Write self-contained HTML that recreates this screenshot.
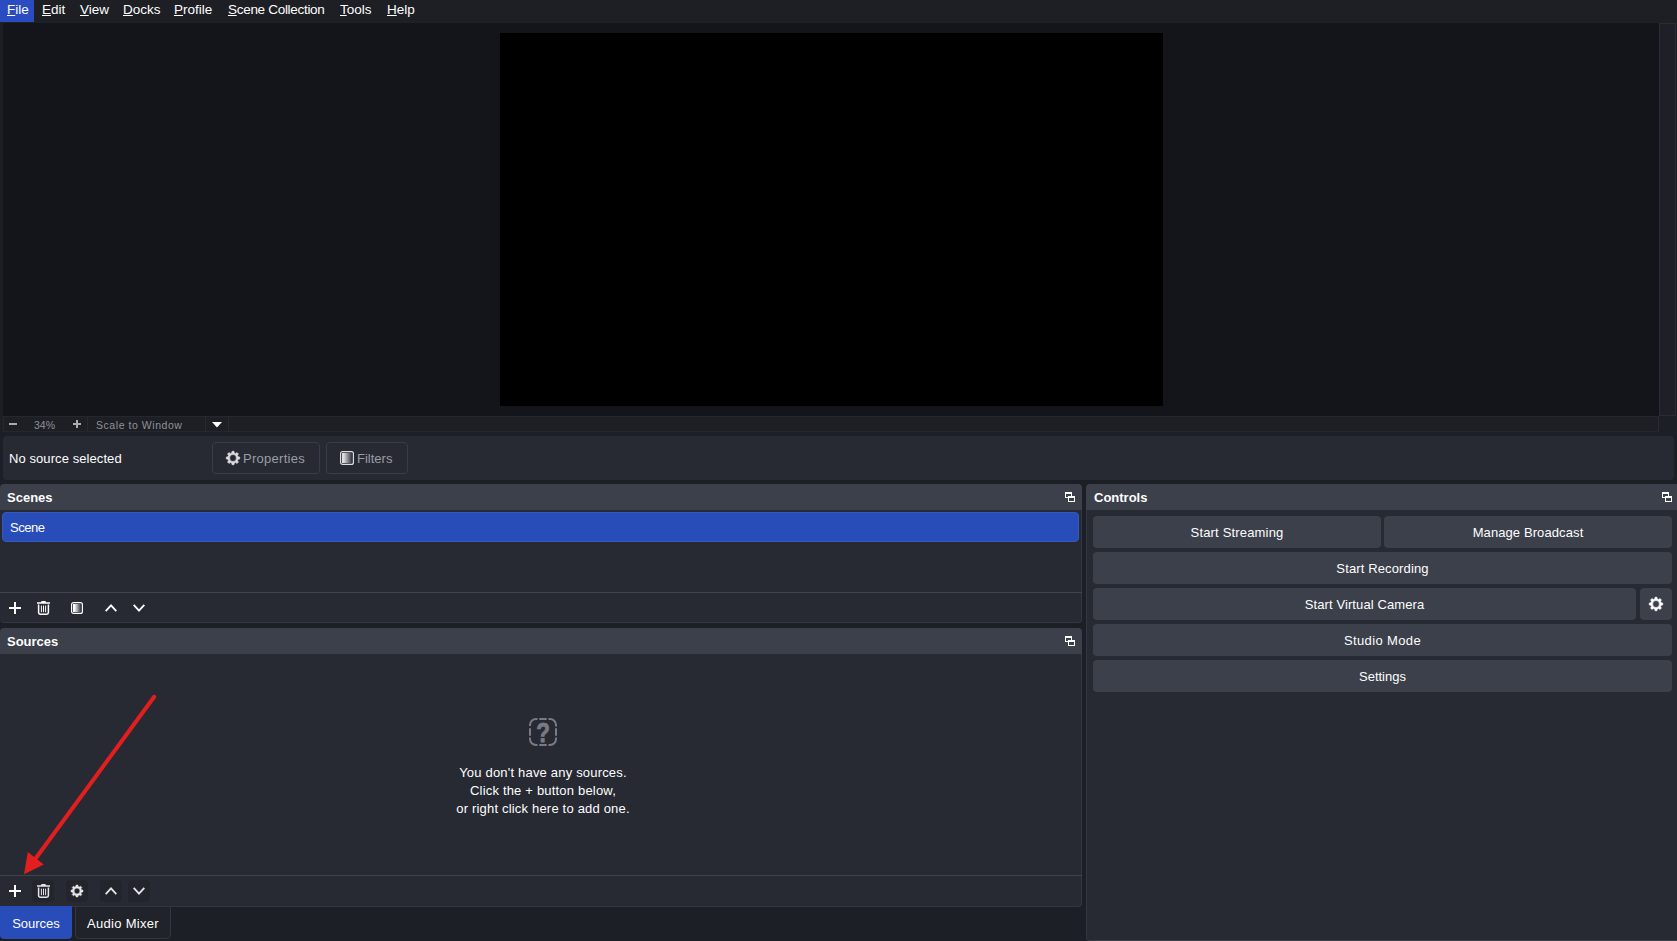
<!DOCTYPE html>
<html lang="en">
<head>
<meta charset="utf-8">
<title>OBS Studio</title>
<style>
*{box-sizing:border-box;margin:0;padding:0}
html,body{width:1677px;height:941px;overflow:hidden;background:#1d1f26}
body{position:relative;font-family:"Liberation Sans","DejaVu Sans",sans-serif;font-size:13px;color:#fefefe;-webkit-font-smoothing:antialiased}
.abs{position:absolute}
#menubar{left:0;top:0;width:1677px;height:22px;background:#1e1f25}
#menubar span.mi{position:absolute;top:0;height:22px;line-height:19px;font-size:13.5px;color:#fefefe;white-space:nowrap}
#menubar span.mi u{text-decoration:underline;text-underline-offset:0.5px;text-decoration-thickness:1px}
#filehl{left:0;top:0;width:34px;height:22px;background:#2a4cc0}
#preview{left:3px;top:22px;width:1656px;height:394px;background:#14151a;border-top:1px solid #202127}
#canvas{left:500px;top:33px;width:663px;height:373px;background:#000}
#vscroll{left:1659px;top:23px;width:17px;height:393px;background:#1f2027;border:1px solid #2a2c34}
#zoombar{left:3px;top:416px;width:1656px;box-shadow:inset 1px 0 #25272e,inset -1px 0 #2a2c34;height:16px;background:#1e1f25;border-top:1px solid #25272e;border-bottom:1px solid #25272e}
#zoombar .sep{position:absolute;top:0;width:1px;height:14px;background:#282a32}
#zoombar .t{position:absolute;top:1px;height:14px;line-height:15px;font-size:10.5px;color:#8f9199;white-space:nowrap}
#srcbar{left:3px;top:436px;width:1671px;height:44px;background:#272a33;border-radius:4px}
.btn-o{position:absolute;border:1px solid #3a3d47;border-radius:4px;background:#272a33;color:#9b9da4;font-size:13px}
.dock-title{position:absolute;height:26px;background:#3c404b;border-radius:4px 4px 0 0;font-weight:bold;font-size:13px;line-height:28px;padding-left:7px;color:#fefefe}
.dock-body{position:absolute;background:#272a33}
.cbtn{position:absolute;height:32px;background:#3c404b;border-radius:4px;color:#fefefe;font-size:13px;line-height:34px;text-align:center;white-space:nowrap}
.tab{position:absolute;top:906px;height:33px;line-height:36px;font-size:13px;text-align:center;color:#fefefe;white-space:nowrap}
svg{position:absolute;overflow:visible}
</style>
</head>
<body>
<!-- MENU BAR -->
<div id="menubar" class="abs">
  <div id="filehl" class="abs"></div>
  <span class="mi" style="left:7px"><u>F</u>ile</span>
  <span class="mi" style="left:42px"><u>E</u>dit</span>
  <span class="mi" style="left:80px"><u>V</u>iew</span>
  <span class="mi" style="left:123px"><u>D</u>ocks</span>
  <span class="mi" style="left:174px"><u>P</u>rofile</span>
  <span class="mi" style="left:228px;letter-spacing:-0.3px"><u>S</u>cene Collection</span>
  <span class="mi" style="left:340px"><u>T</u>ools</span>
  <span class="mi" style="left:387px"><u>H</u>elp</span>
</div>

<!-- PREVIEW -->
<div id="preview" class="abs"></div>
<div id="canvas" class="abs"></div>
<div id="vscroll" class="abs"></div>

<!-- ZOOM BAR -->
<div id="zoombar" class="abs">
  <div class="abs" style="left:6px;top:6px;width:8px;height:2px;background:#a9abb1"></div>
  <span class="t" style="left:31px">34%</span>
  <div class="abs" style="left:70px;top:6px;width:8px;height:2px;background:#a9abb1"></div><div class="abs" style="left:73px;top:3px;width:2px;height:8px;background:#a9abb1"></div>
  <div class="sep" style="left:84px"></div>
  <span class="t" style="left:93px;letter-spacing:0.55px">Scale to Window</span>
  <div class="sep" style="left:202px"></div>
  <svg style="left:209px;top:5px" width="10" height="6" viewBox="0 0 10 6"><path d="M0 0H10L5 5.5Z" fill="#fefefe"/></svg>
  <div class="sep" style="left:225px"></div>
</div>

<!-- SOURCE TOOLBAR -->
<div id="srcbar" class="abs">
  <span class="abs" style="left:6px;top:1px;line-height:44px;font-size:13px;white-space:nowrap;letter-spacing:0.08px">No source selected</span>
  <div class="btn-o" style="left:209px;top:6px;width:108px;height:32px"><span class="abs" style="left:30px;top:0;line-height:32px;letter-spacing:0.27px">Properties</span></div>
  <div class="btn-o" style="left:323px;top:6px;width:82px;height:32px"><span class="abs" style="left:30px;top:0;line-height:32px">Filters</span></div>
</div>

<!-- SCENES DOCK -->
<div class="dock-title" style="left:0;top:484px;width:1082px">Scenes</div>
<div class="dock-body" style="left:0;top:510px;width:1082px;height:113px;border-radius:0 0 4px 4px;border:1px solid #343741;border-top:none;border-left:none"></div>
<div class="abs" style="left:2px;top:512px;width:1077px;height:30px;background:#284cb8;border:1px solid #3658c2;border-radius:4px;line-height:29px;padding-left:7px;font-size:13px;letter-spacing:-0.5px">Scene</div>
<div class="abs" style="left:0;top:592px;width:1082px;height:1px;background:#40434d"></div>

<!-- SOURCES DOCK -->
<div class="dock-title" style="left:0;top:628px;width:1082px">Sources</div>
<div class="dock-body" style="left:0;top:654px;width:1082px;height:253px;border-radius:0 0 4px 0;border:1px solid #343741;border-top:none;border-left:none"></div>
<div class="abs" style="left:0;top:875px;width:1082px;height:1px;background:#40434d"></div>
<div class="abs" style="left:0;top:764px;width:1086px;text-align:center;font-size:13px;line-height:18px;color:#fefefe;letter-spacing:0.19px">You don't have any sources.<br>Click the + button below,<br>or right click here to add one.</div>

<!-- TABS -->
<div class="tab" style="left:0;width:72px;background:#284cb8;border-radius:0 0 4px 4px">Sources</div>
<div class="tab" style="left:75px;width:96px;background:#21232a;border:1px solid #33363f;border-radius:0 0 4px 4px;line-height:34px;letter-spacing:0.3px">Audio Mixer</div>

<!-- CONTROLS DOCK -->
<div class="dock-title" style="left:1086px;top:484px;width:591px;padding-left:8px;border-radius:4px 0 0 0">Controls</div>
<div class="dock-body" style="left:1086px;top:510px;width:591px;height:431px;border-left:1px solid #343741;border-bottom:1px solid #3a3d47;border-radius:0 0 0 4px"></div>
<div class="cbtn" style="left:1093px;top:516px;width:288px;letter-spacing:0.17px">Start Streaming</div>
<div class="cbtn" style="left:1384px;top:516px;width:288px;letter-spacing:0.1px">Manage Broadcast</div>
<div class="cbtn" style="left:1093px;top:552px;width:579px;letter-spacing:0.13px">Start Recording</div>
<div class="cbtn" style="left:1093px;top:588px;width:543px;letter-spacing:0.1px">Start Virtual Camera</div>
<div class="cbtn" style="left:1640px;top:588px;width:32px"></div>
<div class="cbtn" style="left:1093px;top:624px;width:579px;letter-spacing:0.38px">Studio Mode</div>
<div class="cbtn" style="left:1093px;top:660px;width:579px">Settings</div>

<!-- ICONS -->
<svg style="left:9px;top:602px" width="12" height="12" viewBox="0 0 12 12"><path d="M5 0h2v5h5v2h-5v5h-2v-5h-5v-2h5z" fill="#fefefe"/></svg>
<svg style="left:37.0px;top:601px" width="13" height="14" viewBox="0 0 13 14"><path d="M0 1.2h4l.6-1.2h3.8l.6 1.2h4v1.6h-13z" fill="#fefefe"/><path d="M1.6 3.4v8.2a1.7 1.7 0 0 0 1.7 1.7h6.4a1.7 1.7 0 0 0 1.7-1.7v-8.2" fill="none" stroke="#fefefe" stroke-width="1.5"/><path d="M4.4 4.6v6.6M6.5 4.6v6.6M8.6 4.6v6.6" stroke="#fefefe" stroke-width="1" fill="none"/></svg>
<svg style="left:71.0px;top:602.0px" width="12" height="12" viewBox="0 0 12 12"><defs><linearGradient id="g1" x1="0" x2="1" y1="0" y2="0"><stop offset="0" stop-color="#fefefe"/><stop offset="0.18" stop-color="#fefefe"/><stop offset="1" stop-color="#fefefe" stop-opacity="0.05"/></linearGradient></defs><rect x="0.6" y="0.6" width="10.8" height="10.8" rx="2" fill="none" stroke="#fefefe" stroke-width="1.2"/><rect x="2" y="2" width="8" height="8" fill="url(#g1)"/></svg>
<svg style="left:105px;top:604px" width="12" height="8" viewBox="0 0 12 8"><path d="M0.7 7.2L6 1.3L11.3 7.2" fill="none" stroke="#fefefe" stroke-width="1.8"/></svg>
<svg style="left:133px;top:604px" width="12" height="8" viewBox="0 0 12 8"><path d="M0.7 0.8L6 6.7L11.3 0.8" fill="none" stroke="#fefefe" stroke-width="1.8"/></svg>
<div class="abs" style="left:32px;top:880px;width:22px;height:22px;background:#23252d;border-radius:4px"></div>
<div class="abs" style="left:66px;top:880px;width:22px;height:22px;background:#23252d;border-radius:4px"></div>
<div class="abs" style="left:100px;top:880px;width:22px;height:22px;background:#23252d;border-radius:4px"></div>
<div class="abs" style="left:128px;top:880px;width:22px;height:22px;background:#23252d;border-radius:4px"></div>
<svg style="left:9px;top:885px" width="12" height="12" viewBox="0 0 12 12"><path d="M5 0h2v5h5v2h-5v5h-2v-5h-5v-2h5z" fill="#fefefe"/></svg>
<svg style="left:37.0px;top:884px" width="13" height="14" viewBox="0 0 13 14"><path d="M0 1.2h4l.6-1.2h3.8l.6 1.2h4v1.6h-13z" fill="#e4e5e8"/><path d="M1.6 3.4v8.2a1.7 1.7 0 0 0 1.7 1.7h6.4a1.7 1.7 0 0 0 1.7-1.7v-8.2" fill="none" stroke="#e4e5e8" stroke-width="1.5"/><path d="M4.4 4.6v6.6M6.5 4.6v6.6M8.6 4.6v6.6" stroke="#e4e5e8" stroke-width="1" fill="none"/></svg>
<svg style="left:70px;top:884px" width="14" height="14" viewBox="0 0 14 14"><path d="M5.88 2.48 L6.11 1.07 L7.89 1.07 L8.12 2.48 L9.40 3.01 L10.56 2.17 L11.83 3.44 L10.99 4.60 L11.52 5.88 L12.93 6.11 L12.93 7.89 L11.52 8.12 L10.99 9.40 L11.83 10.56 L10.56 11.83 L9.40 10.99 L8.12 11.52 L7.89 12.93 L6.11 12.93 L5.88 11.52 L4.60 10.99 L3.44 11.83 L2.17 10.56 L3.01 9.40 L2.48 8.12 L1.07 7.89 L1.07 6.11 L2.48 5.88 L3.01 4.60 L2.17 3.44 L3.44 2.17 L4.60 3.01Z M4.04 7.00 a2.96 2.96 0 1 0 5.92 0 a2.96 2.96 0 1 0 -5.92 0Z" fill="#e4e5e8" fill-rule="evenodd" stroke="#e4e5e8" stroke-width="0.6" stroke-linejoin="round"/></svg>
<svg style="left:105px;top:887px" width="12" height="8" viewBox="0 0 12 8"><path d="M0.7 7.2L6 1.3L11.3 7.2" fill="none" stroke="#e4e5e8" stroke-width="1.8"/></svg>
<svg style="left:133px;top:887px" width="12" height="8" viewBox="0 0 12 8"><path d="M0.7 0.8L6 6.7L11.3 0.8" fill="none" stroke="#e4e5e8" stroke-width="1.8"/></svg>
<svg style="left:1065px;top:492px" width="10" height="10" viewBox="0 0 10 10"><rect x="0" y="0" width="7" height="6" fill="#fefefe"/><rect x="1" y="2" width="5" height="3" fill="#3c404b"/><rect x="3" y="4" width="7" height="6" fill="#fefefe"/><rect x="4" y="6" width="5" height="3" fill="#3c404b"/></svg>
<svg style="left:1065px;top:636px" width="10" height="10" viewBox="0 0 10 10"><rect x="0" y="0" width="7" height="6" fill="#fefefe"/><rect x="1" y="2" width="5" height="3" fill="#3c404b"/><rect x="3" y="4" width="7" height="6" fill="#fefefe"/><rect x="4" y="6" width="5" height="3" fill="#3c404b"/></svg>
<svg style="left:1662px;top:492px" width="10" height="10" viewBox="0 0 10 10"><rect x="0" y="0" width="7" height="6" fill="#fefefe"/><rect x="1" y="2" width="5" height="3" fill="#3c404b"/><rect x="3" y="4" width="7" height="6" fill="#fefefe"/><rect x="4" y="6" width="5" height="3" fill="#3c404b"/></svg>
<svg style="left:225px;top:450px" width="16" height="16" viewBox="0 0 16 16"><path d="M6.73 2.90 L6.99 1.28 L9.01 1.28 L9.27 2.90 L10.71 3.50 L12.04 2.53 L13.47 3.96 L12.50 5.29 L13.10 6.73 L14.72 6.99 L14.72 9.01 L13.10 9.27 L12.50 10.71 L13.47 12.04 L12.04 13.47 L10.71 12.50 L9.27 13.10 L9.01 14.72 L6.99 14.72 L6.73 13.10 L5.29 12.50 L3.96 13.47 L2.53 12.04 L3.50 10.71 L2.90 9.27 L1.28 9.01 L1.28 6.99 L2.90 6.73 L3.50 5.29 L2.53 3.96 L3.96 2.53 L5.29 3.50Z M4.66 8.00 a3.34 3.34 0 1 0 6.67 0 a3.34 3.34 0 1 0 -6.67 0Z" fill="#dcdde1" fill-rule="evenodd" stroke="#dcdde1" stroke-width="0.6" stroke-linejoin="round"/></svg>
<svg style="left:340.0px;top:451.0px" width="14" height="14" viewBox="0 0 14 14"><defs><linearGradient id="g2" x1="0" x2="1" y1="0" y2="0"><stop offset="0" stop-color="#dcdde1"/><stop offset="0.18" stop-color="#dcdde1"/><stop offset="1" stop-color="#dcdde1" stop-opacity="0.05"/></linearGradient></defs><rect x="0.6" y="0.6" width="12.8" height="12.8" rx="2" fill="none" stroke="#dcdde1" stroke-width="1.2"/><rect x="2" y="2" width="10" height="10" fill="url(#g2)"/></svg>
<svg style="left:1648px;top:596px" width="16" height="16" viewBox="0 0 16 16"><path d="M6.73 2.90 L6.99 1.28 L9.01 1.28 L9.27 2.90 L10.71 3.50 L12.04 2.53 L13.47 3.96 L12.50 5.29 L13.10 6.73 L14.72 6.99 L14.72 9.01 L13.10 9.27 L12.50 10.71 L13.47 12.04 L12.04 13.47 L10.71 12.50 L9.27 13.10 L9.01 14.72 L6.99 14.72 L6.73 13.10 L5.29 12.50 L3.96 13.47 L2.53 12.04 L3.50 10.71 L2.90 9.27 L1.28 9.01 L1.28 6.99 L2.90 6.73 L3.50 5.29 L2.53 3.96 L3.96 2.53 L5.29 3.50Z M4.66 8.00 a3.34 3.34 0 1 0 6.67 0 a3.34 3.34 0 1 0 -6.67 0Z" fill="#fefefe" fill-rule="evenodd" stroke="#fefefe" stroke-width="0.6" stroke-linejoin="round"/></svg>
<svg style="left:529px;top:718px" width="28" height="28" viewBox="0 0 28 28"><g fill="none" stroke="#787b85" stroke-width="2"><path d="M1 8V7a6 6 0 0 1 6-6h1.5"/><path d="M19.5 1H21a6 6 0 0 1 6 6v1.5"/><path d="M27 19.5V21a6 6 0 0 1-6 6h-1.5"/><path d="M8.500 27H7a6 6 0 0 1-6-6v-1.500"/><path d="M10.300 1h7.400M10.300 27h7.400M1 10.300v7.400M27 10.300v7.400"/></g><text transform="translate(14.1,24.2) scale(0.8,1)" x="0" y="0" text-anchor="middle" font-family="Liberation Sans, sans-serif" font-weight="bold" font-size="28" fill="#787b85" stroke="#787b85" stroke-width="0.9">?</text></svg>
<!-- RED ARROW -->
<svg style="left:0;top:0" width="1677" height="941" viewBox="0 0 1677 941">
  <line x1="154.2" y1="696.8" x2="36" y2="858" stroke="#e31e1e" stroke-width="4" stroke-linecap="round"/>
  <polygon points="24,874.2 27.8,852 43.8,864.4" fill="#e31e1e"/>
</svg>
</body>
</html>
